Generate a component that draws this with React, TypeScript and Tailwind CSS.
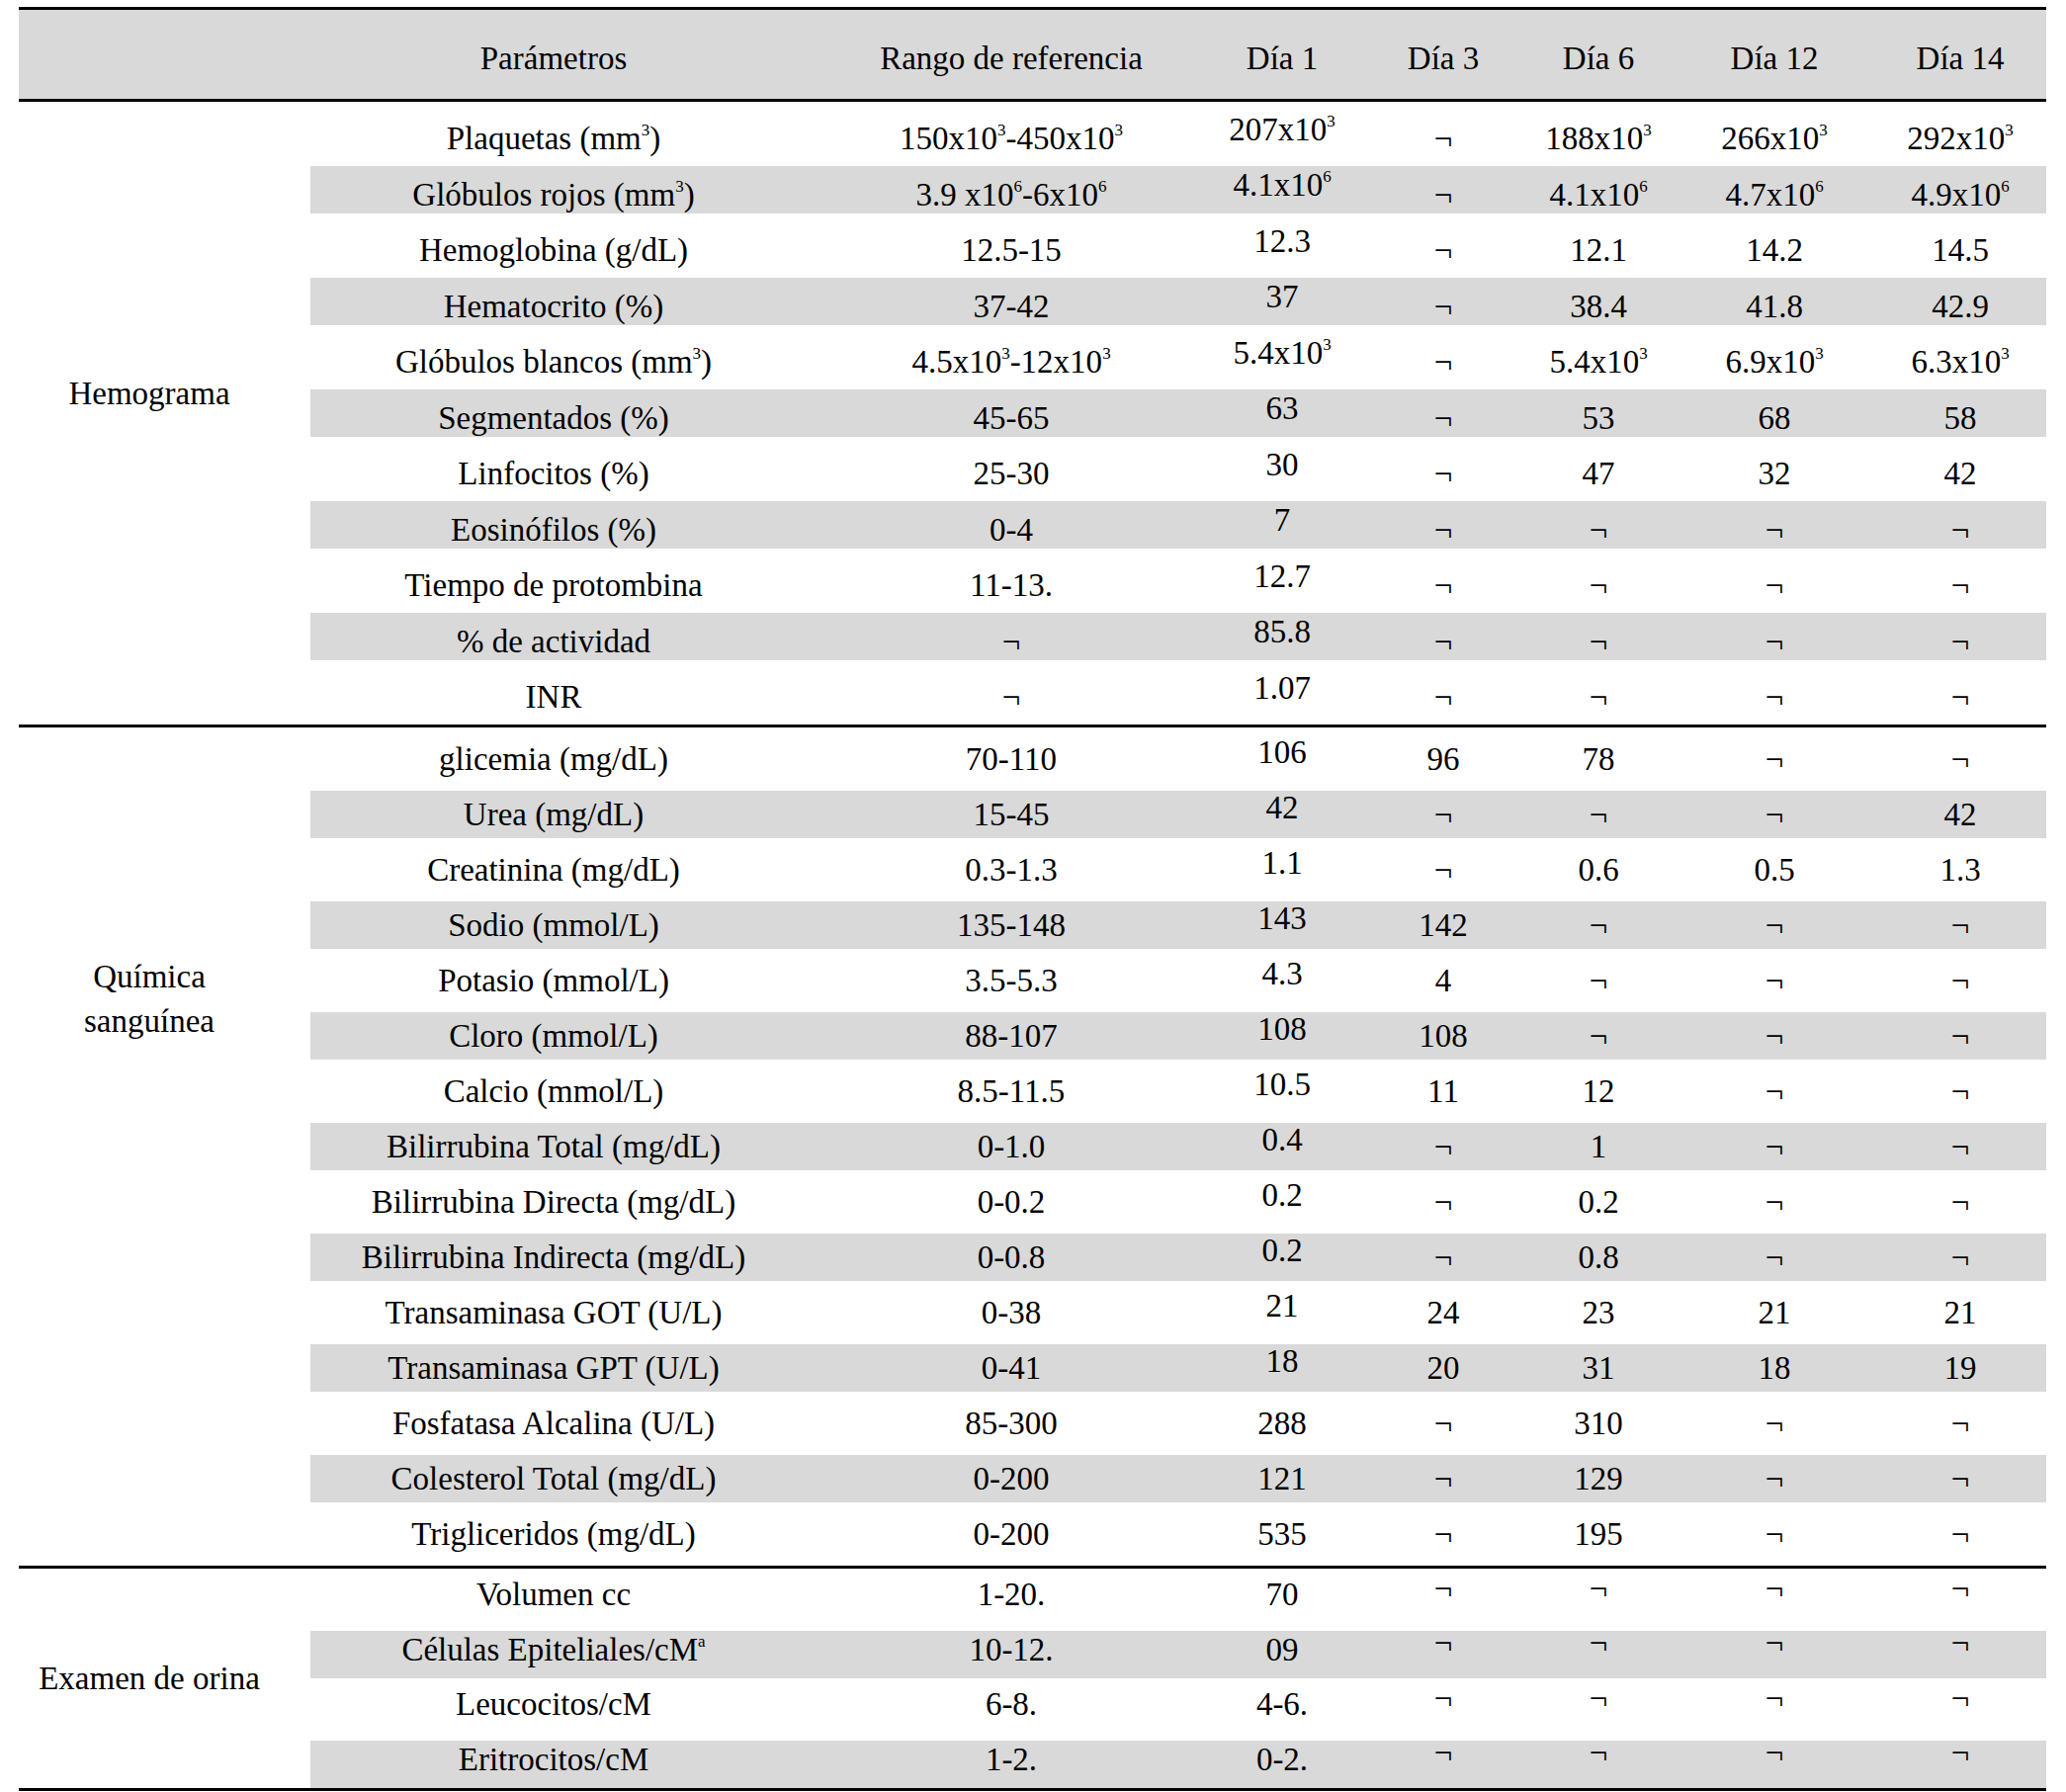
import React from "react";

type Section = {
  label: string[];
  span: string;
  labelPad: string;
  white: string;
  base: string;
  raise: number;
  raiseClass: string;
  dashClass: string;
  rows: string[][];
};

const GRID =
  "grid grid-cols-[295px_492px_434px_114px_212px_102px_254px_148px]";

const sections: Section[] = [
  {
    label: ["Hemograma"],
    span: "row-span-11",
    labelPad: "pb-[40px]",
    white: "h-[65px]",
    base: "pt-[10px]",
    raise: 10,
    raiseClass: "pt-[10px] pb-[19px]",
    dashClass: "",
    rows: [
      ["Plaquetas (mm^3)", "150x10^3-450x10^3", "207x10^3", "¬", "188x10^3", "266x10^3", "292x10^3"],
      ["Glóbulos rojos (mm^3)", "3.9 x10^6-6x10^6", "4.1x10^6", "¬", "4.1x10^6", "4.7x10^6", "4.9x10^6"],
      ["Hemoglobina (g/dL)", "12.5-15", "12.3", "¬", "12.1", "14.2", "14.5"],
      ["Hematocrito (%)", "37-42", "37", "¬", "38.4", "41.8", "42.9"],
      ["Glóbulos blancos (mm^3)", "4.5x10^3-12x10^3", "5.4x10^3", "¬", "5.4x10^3", "6.9x10^3", "6.3x10^3"],
      ["Segmentados (%)", "45-65", "63", "¬", "53", "68", "58"],
      ["Linfocitos (%)", "25-30", "30", "¬", "47", "32", "42"],
      ["Eosinófilos (%)", "0-4", "7", "¬", "¬", "¬", "¬"],
      ["Tiempo de protombina", "11-13.", "12.7", "¬", "¬", "¬", "¬"],
      ["% de actividad", "¬", "85.8", "¬", "¬", "¬", "¬"],
      ["INR", "¬", "1.07", "¬", "¬", "¬", "¬"],
    ],
  },
  {
    label: ["Química", "sanguínea"],
    span: "row-span-10",
    labelPad: "pb-[10px]",
    white: "h-[64px]",
    base: "",
    raise: 11,
    raiseClass: "pb-[14px]",
    dashClass: "",
    rows: [
      ["glicemia (mg/dL)", "70-110", "106", "96", "78", "¬", "¬"],
      ["Urea (mg/dL)", "15-45", "42", "¬", "¬", "¬", "42"],
      ["Creatinina (mg/dL)", "0.3-1.3", "1.1", "¬", "0.6", "0.5", "1.3"],
      ["Sodio (mmol/L)", "135-148", "143", "142", "¬", "¬", "¬"],
      ["Potasio (mmol/L)", "3.5-5.3", "4.3", "4", "¬", "¬", "¬"],
      ["Cloro (mmol/L)", "88-107", "108", "108", "¬", "¬", "¬"],
      ["Calcio (mmol/L)", "8.5-11.5", "10.5", "11", "12", "¬", "¬"],
      ["Bilirrubina Total (mg/dL)", "0-1.0", "0.4", "¬", "1", "¬", "¬"],
      ["Bilirrubina Directa (mg/dL)", "0-0.2", "0.2", "¬", "0.2", "¬", "¬"],
      ["Bilirrubina Indirecta (mg/dL)", "0-0.8", "0.2", "¬", "0.8", "¬", "¬"],
      ["Transaminasa GOT (U/L)", "0-38", "21", "24", "23", "21", "21"],
      ["Transaminasa GPT (U/L)", "0-41", "18", "20", "31", "18", "19"],
      ["Fosfatasa Alcalina (U/L)", "85-300", "288", "¬", "310", "¬", "¬"],
      ["Colesterol Total (mg/dL)", "0-200", "121", "¬", "129", "¬", "¬"],
      ["Trigliceridos (mg/dL)", "0-200", "535", "¬", "195", "¬", "¬"],
    ],
  },
  {
    label: ["Examen de orina"],
    span: "row-span-4",
    labelPad: "",
    white: "h-[63px]",
    base: "pb-[10px]",
    raise: -1,
    raiseClass: "",
    dashClass: "pb-[23px]",
    rows: [
      ["Volumen cc", "1-20.", "70", "¬", "¬", "¬", "¬"],
      ["Células Epiteliales/cM^a", "10-12.", "09", "¬", "¬", "¬", "¬"],
      ["Leucocitos/cM", "6-8.", "4-6.", "¬", "¬", "¬", "¬"],
      ["Eritrocitos/cM", "1-2.", "0-2.", "¬", "¬", "¬", "¬"],
    ],
  },
];

function Txt({ s }: { s: string }) {
  const parts = s.split(/\^(\w)/);
  return (
    <>
      {parts.map((p, i) =>
        i % 2 ? (
          <sup key={i} className="text-[17px]">
            {p}
          </sup>
        ) : (
          <span key={i}>{p}</span>
        )
      )}
    </>
  );
}

function SectionBlock({ sec }: { sec: Section }) {
  return (
    <div className={`${GRID} border-b-[3px] border-black`}>
      <div
        className={`col-start-1 ${sec.span} flex flex-col items-center justify-center pr-[31px] leading-[45px] ${sec.labelPad}`}
      >
        {sec.label.map((l) => (
          <span key={l}>{l}</span>
        ))}
      </div>
      {sec.rows.map((r, ri) => {
        const shade = ri % 2 === 1;
        const rowCls = shade ? "h-[48px] bg-[#d9d9d9]" : `${sec.white} bg-white`;
        return r.map((c, ci) => {
          let pad = sec.base;
          if (ci === 2 && ri <= sec.raise) pad = sec.raiseClass;
          else if (ci >= 3 && c === "¬" && sec.dashClass) pad = sec.dashClass;
          const col = ci === 0 ? "col-start-2" : ci === 6 ? "pr-[26px]" : "";
          return (
            <div
              key={`${ri}-${ci}`}
              className={`${rowCls} ${col} ${pad} min-w-0 flex items-center justify-center whitespace-nowrap leading-none`}
            >
              <Txt s={c} />
            </div>
          );
        });
      })}
    </div>
  );
}

export default function App() {
  const head = ["", "Parámetros", "Rango de referencia", "Día 1", "Día 3", "Día 6", "Día 12", "Día 14"];
  return (
    <div className="min-h-screen bg-white pt-[7px] pl-[19px] font-['Liberation_Serif',serif] text-[33px] text-black">
      <div className="w-[2051px]">
        <div className={`${GRID} h-[96px] border-y-[3px] border-black bg-[#d9d9d9]`}>
          {head.map((h, i) => (
            <div
              key={i}
              className={`flex items-center justify-center whitespace-nowrap pt-[8px] leading-none ${i === 7 ? "pr-[26px]" : ""}`}
            >
              {h}
            </div>
          ))}
        </div>
        {sections.map((s) => (
          <SectionBlock key={s.label[0]} sec={s} />
        ))}
      </div>
    </div>
  );
}
